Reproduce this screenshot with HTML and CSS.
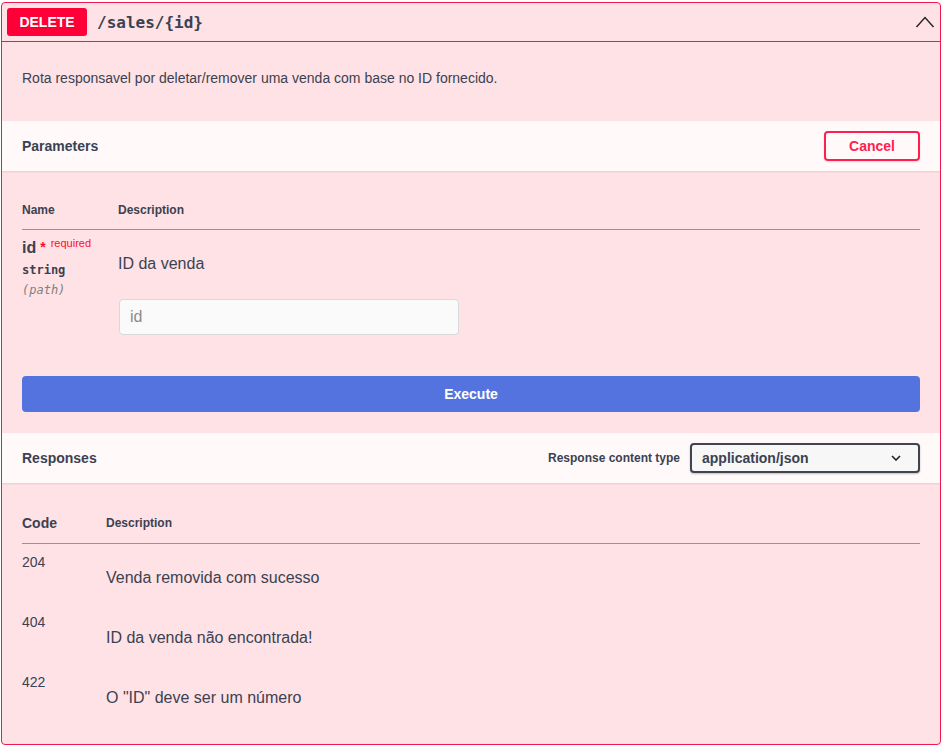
FILE: index.html
```html
<!DOCTYPE html>
<html lang="pt">
<head>
<meta charset="utf-8">
<title>DELETE /sales/{id}</title>
<link rel="stylesheet" href="styles.css">
</head>
<body>
<div class="opblock">
  <div class="summary">
    <span class="method">DELETE</span>
    <span class="path">/sales/{id}</span>
    <svg class="arrow" width="20" height="20" viewBox="0 0 20 20"><polyline points="1.5,15 10,5.5 18.5,15" fill="none" stroke="#222" stroke-width="1.4"/></svg>
  </div>
  <div class="desc"><p>Rota responsavel por deletar/remover uma venda com base no ID fornecido.</p></div>

  <div class="section-header">
    <h4>Parameters</h4>
    <button class="btn cancel" type="button">Cancel</button>
  </div>
  <div class="table-container">
    <table class="params">
      <thead>
        <tr><th class="col-name">Name</th><th>Description</th></tr>
      </thead>
      <tbody>
        <tr>
          <td class="col-name">
            <div class="pname">id<span class="star">*</span><span class="req">required</span></div>
            <div class="ptype">string</div>
            <div class="pin">(path)</div>
          </td>
          <td class="pdesc">
            <p>ID da venda</p>
            <input class="pinput" type="text" placeholder="id">
          </td>
        </tr>
      </tbody>
    </table>
  </div>
  <div class="execute-wrapper"><button class="btn execute" type="button">Execute</button></div>

  <div class="section-header">
    <h4>Responses</h4>
    <div class="ctype">
      <span class="ctype-label">Response content type</span>
      <div class="select"><span>application/json</span><svg width="10" height="6" viewBox="0 0 10 6"><polyline points="1,1 5,5 9,1" fill="none" stroke="#222" stroke-width="1.6"/></svg></div>
    </div>
  </div>
  <div class="responses-inner">
    <table class="responses">
      <thead>
        <tr><th class="col-code">Code</th><th class="col-desc">Description</th></tr>
      </thead>
      <tbody>
        <tr class="row"><td class="code">204</td><td class="rdesc"><p>Venda removida com sucesso</p></td></tr>
        <tr class="row"><td class="code">404</td><td class="rdesc"><p>ID da venda não encontrada!</p></td></tr>
        <tr class="row"><td class="code">422</td><td class="rdesc"><p>O "ID" deve ser um número</p></td></tr>
      </tbody>
    </table>
  </div>
</div>
</body>
</html>
```
FILE: styles.css
```css
* { box-sizing: border-box; }
body {
  margin: 0;
  font-family: "Liberation Sans", Arial, sans-serif;
  color: #3b4151;
  background: #fff;
}
.opblock {
  margin: 2px 1px 0 1px;
  width: 940px;
  border: 1px solid #f3184c;
  border-radius: 4px;
  background: #ffe2e5;
}
.summary {
  display: flex;
  align-items: center;
  padding: 5px;
  border-bottom: 1px solid #f3184c;
}
.method {
  width: 80px;
  padding: 6px 0;
  line-height: 16px;
  font-size: 14px;
  font-weight: 700;
  color: #fff;
  text-align: center;
  background: #fe0037;
  border-radius: 3px;
  text-shadow: 0 1px 0 rgba(0,0,0,.1);
}
.path {
  flex: 1;
  padding: 0 10px;
  font-family: "DejaVu Sans Mono", monospace;
  font-size: 16px;
  font-weight: 700;
  color: #3b4151;
}
.arrow { display: block; }
.desc { padding: 15px 20px; margin-bottom: 5px; }
.desc p { margin: 13px 0 15px; font-size: 14px; line-height: 16px; }

.section-header {
  display: flex;
  align-items: center;
  justify-content: space-between;
  min-height: 50px;
  padding: 0 20px;
  background: rgba(255,255,255,.8);
  box-shadow: 0 1px 2px rgba(0,0,0,.1);
}
.section-header h4 { margin: 0; font-size: 14px; font-weight: 700; }
.btn {
  font-family: inherit;
  font-size: 14px;
  font-weight: 700;
  border-radius: 4px;
  cursor: pointer;
}
.cancel {
  width: 96px;
  height: 30px;
  border: 2px solid #ff1f4f;
  color: #ff1f4f;
  background: transparent;
  box-shadow: 0 1px 2px rgba(0,0,0,.1);
}
.table-container { padding: 20px 20px 0; }
table { width: 100%; border-collapse: collapse; }
th {
  text-align: left;
  font-size: 12px;
  font-weight: 700;
  line-height: 14px;
  padding: 12px 0;
  border-bottom: 1px solid rgba(59,65,81,.3);
}
.params .col-name { width: 96px; }
td { vertical-align: top; padding: 0; }
.params td.col-name { padding-top: 9px; }
.pname { font-size: 16px; font-weight: 700; line-height: 18px; }
.star { color: #ff0a2e; font-size: 14px; margin-left: 4px; position: relative; top: -1px; }
.req { color: #ff0a2e; font-size: 11px; font-weight: 400; margin-left: 5px; position: relative; top: -6px; }
.ptype {
  margin-top: 5px;
  font-family: "DejaVu Sans Mono", monospace;
  font-size: 12px;
  font-weight: 700;
  line-height: 14px;
}
.pin {
  margin-top: 6px;
  font-family: "DejaVu Sans Mono", monospace;
  font-size: 12px;
  font-style: italic;
  line-height: 14px;
  color: #808080;
}
.pdesc { padding-top: 10px; }
.pdesc p { margin: 15px 0 0; font-size: 16px; line-height: 18px; }
.pinput {
  display: block;
  margin: 26px 0 0 1px;
  width: 340px;
  height: 36px;
  padding: 8px 10px;
  font-family: inherit;
  font-size: 16px;
  color: #3b4151;
  background: #fafafa;
  border: 1px solid #d9d9d9;
  border-radius: 4px;
}
.pinput::placeholder { color: #8a8a8a; }
.execute-wrapper { padding: 41px 20px 21px; }
.execute {
  display: block;
  width: 100%;
  height: 36px;
  border: 2px solid #5573df;
  background: #5573df;
  color: #fff;
}
.ctype { display: flex; align-items: center; }
.ctype-label { font-size: 12px; font-weight: 700; margin-right: 10px; }
.select {
  display: flex;
  align-items: center;
  justify-content: space-between;
  width: 230px;
  height: 30px;
  padding: 0 17px 0 10px;
  font-size: 14px;
  font-weight: 700;
  border: 2px solid #41444e;
  border-radius: 4px;
  background: #f7f7f7;
  box-shadow: 0 1px 2px rgba(0,0,0,.25);
}
.select svg { display: block; }
.responses-inner { padding: 20px; }
.responses .col-code { width: 84px; font-size: 14px; line-height: 16px; }
.responses .col-desc { font-size: 12px; }
.responses .row { height: 60px; }
.code { padding-top: 10px; font-size: 14px; line-height: 16px; }
.rdesc { padding-top: 10px; }
.rdesc p { margin: 15px 0 0; font-size: 16px; line-height: 18px; }
```
